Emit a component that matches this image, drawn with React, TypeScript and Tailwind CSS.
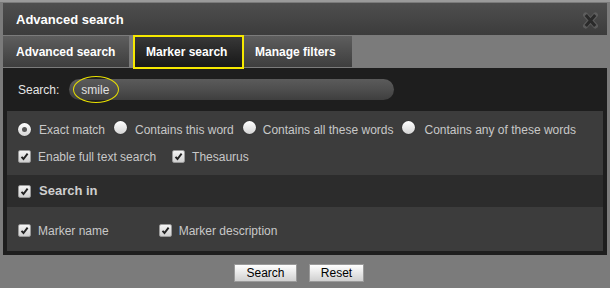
import React from 'react'

const Radio = ({ checked }: { checked?: boolean }) => (
  <span className="inline-flex h-[13px] w-[13px] shrink-0 items-center justify-center rounded-full bg-gradient-to-b from-[#ffffff] to-[#d4d4d4] shadow-[0_0_1px_#111]">
    {checked && <span className="h-[5px] w-[5px] rounded-full bg-[#555]" />}
  </span>
)

const Check = () => (
  <span className="inline-flex h-[13px] w-[13px] shrink-0 items-center justify-center rounded-[2px] border border-[#999] bg-gradient-to-b from-[#f4f4f4] to-[#cfcfcf]">
    <svg width="9" height="9" viewBox="0 0 9 9">
      <path d="M1.5 4.8 L3.5 7 L7.6 1.6" fill="none" stroke="#222" strokeWidth="1.9" />
    </svg>
  </span>
)

// close icon: dark thick cross with a soft light halo
const CloseIcon = () => (
  <svg width="17" height="17" viewBox="0 0 17 17">
    <path d="M3.5 3 L13.5 14 M13.5 3 L3.5 14" stroke="#6c6c6c" strokeWidth="5" strokeLinecap="round" opacity="0.6" />
    <path d="M3.8 3 L13.2 14 M13.2 3 L3.8 14" stroke="#2a2a2a" strokeWidth="3" />
  </svg>
)

export default function App() {
  return (
    <div className="h-[288px] w-[610px] overflow-hidden border-t-[2px] border-[#9a9a9a] bg-[#7b7b7b] pl-[3px] pr-[3px] pt-px font-['Liberation_Sans',Arial,sans-serif]">
      <div className="flex h-[32px] items-center justify-between bg-gradient-to-b from-[#4e4e4e] to-[#3c3c3c] pl-[13px] pr-[8px] pt-[2px]">
        <span className="text-[13px] font-bold text-white">Advanced search</span>
        <CloseIcon />
      </div>

      <div className="flex h-[33px] items-start">
        <div className="mt-px flex h-[31px] w-[126px] items-center bg-gradient-to-b from-[#5e5e5e] to-[#3e3e3e] pl-[13px] text-[12px] font-bold text-white">
          Advanced search
        </div>
        <div className="relative z-10 ml-[4px] flex h-[34px] w-[111px] items-center border-2 border-[#f5e800] bg-gradient-to-b from-[#383838] to-[#181818] pl-[11px] text-[12px] font-bold text-white">
          Marker search
        </div>
        <div className="mt-px flex h-[31px] w-[108px] items-center bg-gradient-to-b from-[#5e5e5e] to-[#3e3e3e] pl-[11px] text-[12px] font-bold text-white">
          Manage filters
        </div>
      </div>

      <div className="h-[187px] bg-[#1e1e1e] px-[4px] pb-[4px]">
        <div className="relative flex h-[43px] items-center pl-[11px]">
          <span className="text-[12px] text-[#e6e6e6]">Search:</span>
          <div className="ml-[10px] flex h-[21px] w-[325px] items-center rounded-full bg-gradient-to-b from-[#5b5b5b] via-[#4e4e4e] to-[#3e3e3e] pl-[12px] text-[12px] text-[#e0e0e0]">
            smile
          </div>
          <span className="absolute left-[66px] top-[8px] h-[27px] w-[46px] rounded-[50%] border border-[#e8e000]" />
        </div>

        <div className="flex h-[64px] flex-col justify-center gap-[9px] bg-[#3c3c3c] pl-[11px] text-[12px] text-[#c8c8c8]">
          <div className="flex items-center">
            <Radio checked />
            <span className="ml-[8px]">Exact match</span>
            <span className="ml-[9px]"><Radio /></span>
            <span className="ml-[8px]">Contains this word</span>
            <span className="ml-[9px]"><Radio /></span>
            <span className="ml-[7px]">Contains all these words</span>
            <span className="ml-[9px]"><Radio /></span>
            <span className="ml-[9px]">Contains any of these words</span>
          </div>
          <div className="flex items-center">
            <Check />
            <span className="ml-[7px]">Enable full text search</span>
            <span className="ml-[16px]"><Check /></span>
            <span className="ml-[7px]">Thesaurus</span>
          </div>
        </div>

        <div className="flex h-[32px] items-center bg-[#2c2c2c] pl-[11px]">
          <Check />
          <span className="ml-[8px] text-[13px] font-bold text-[#cfcfcf]">Search in</span>
        </div>

        <div className="flex h-[44px] items-center bg-[#3c3c3c] pl-[11px] pt-[3px] text-[12px] text-[#c8c8c8]">
          <Check />
          <span className="ml-[7px]">Marker name</span>
          <span className="ml-[50px]"><Check /></span>
          <span className="ml-[7px]">Marker description</span>
        </div>
      </div>

      <div className="flex h-[33px] items-center justify-center gap-[12px] pr-[12px] pt-[2px]">
        <button className="h-[18px] w-[63px] border border-[#9a9a9a] bg-gradient-to-b from-[#ffffff] to-[#d0d0d0] text-[12px] leading-none text-black">
          Search
        </button>
        <button className="h-[18px] w-[55px] border border-[#9a9a9a] bg-gradient-to-b from-[#ffffff] to-[#d0d0d0] text-[12px] leading-none text-black">
          Reset
        </button>
      </div>
    </div>
  )
}
